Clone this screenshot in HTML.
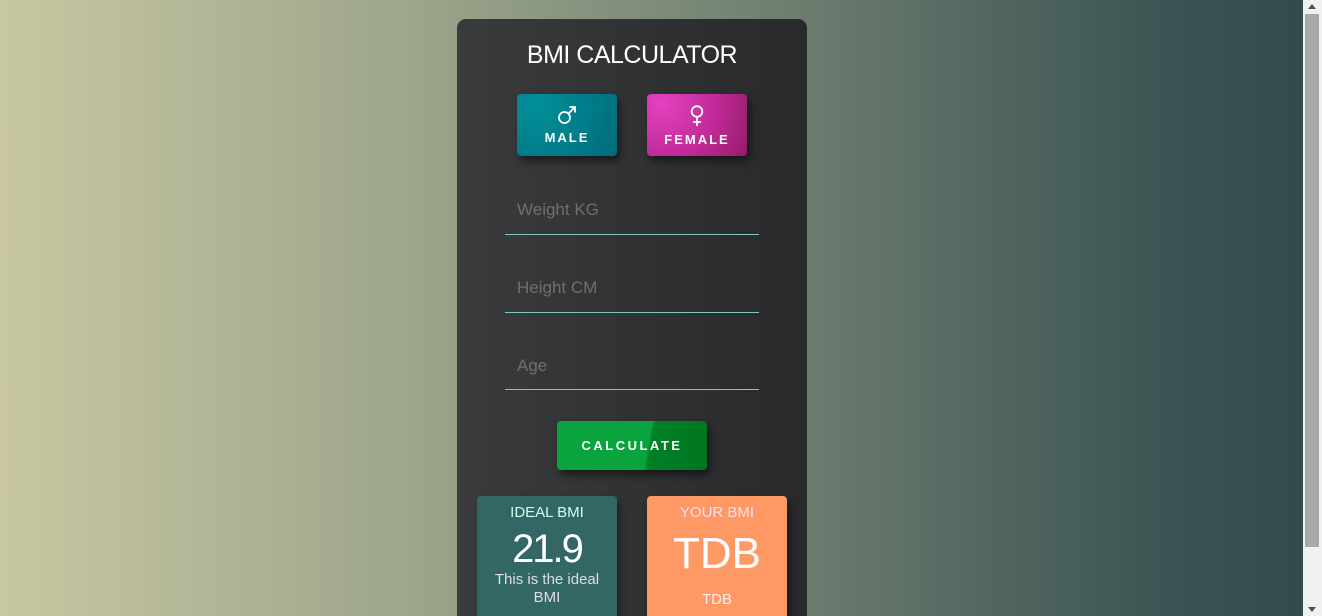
<!DOCTYPE html>
<html><head><style>
html,body{margin:0;padding:0;width:1322px;height:616px;overflow:hidden;}
body{position:relative;font-family:"Liberation Sans",sans-serif;
background:linear-gradient(90deg,#c8c7a2 0%,#9aa389 33%,#6d7d70 60%,#3c5453 88%,#324b4c 98%);}
.sb{position:absolute;left:1303px;top:0;width:19px;height:616px;background:#f1f1f1;}
.sb .th{position:absolute;left:2px;top:14px;width:14px;height:533px;background:#a8a8a8;}
.sb .up{position:absolute;left:5px;top:4px;border:4px solid transparent;border-bottom:5px solid #505050;border-top:0;}
.sb .dn{position:absolute;left:5px;bottom:4px;border:4px solid transparent;border-top:5px solid #505050;border-bottom:0;}
.card{position:absolute;left:457px;top:19px;width:350px;height:597px;border-radius:9px 9px 0 0;background:linear-gradient(90deg,#3a3b3d,#28292b);overflow:hidden;}
h1{position:absolute;left:0;width:350px;top:22px;margin:0;text-align:center;color:#fff;font-weight:normal;font-size:25px;letter-spacing:-0.5px;}
.g{position:absolute;top:75px;width:100px;height:62px;border-radius:4px;color:#fff;text-align:center;box-shadow:3px 5px 8px rgba(0,0,0,.5);}
.g svg{display:block;margin:11px auto 0;}
.g .t{font-size:13px;font-weight:bold;letter-spacing:2px;margin-top:5px;}
.m{left:60px;background:radial-gradient(circle at 20% 20%,#029098,#017a88 60%,#016a7c);}
.f{left:190px;background:radial-gradient(circle at 15% 15%,#e441c0,#c02a98 55%,#921c66);}
.in{position:absolute;left:48px;width:254px;height:0;border-bottom:1px solid #7cc8c4;}
.lb{position:absolute;left:60px;color:#6e706f;font-size:17px;}
.calc{position:absolute;left:100px;top:402px;width:150px;height:49px;border-radius:4px;background:linear-gradient(100deg,#0aa43e 60%,#008027 62%,#007520);color:#fff;font-size:13px;font-weight:bold;letter-spacing:2.5px;text-align:center;line-height:49px;box-shadow:3px 5px 8px rgba(0,0,0,.5);}
.r{position:absolute;top:477px;width:140px;height:130px;border-radius:4px;text-align:center;color:#fff;box-shadow:3px 5px 8px rgba(0,0,0,.4);}
.r .h{font-size:15px;margin-top:8px;}
</style></head><body>
<div class="card">
<h1>BMI CALCULATOR</h1>
<div class="g m"><svg width="20" height="20" viewBox="0 0 20 20" fill="none" stroke="#fff" stroke-width="1.8"><circle cx="7.5" cy="12.5" r="5.5"/><path d="M11.5 8.5L18 2M12.5 2H18V7.5"/></svg><div class="t">MALE</div></div>
<div class="g f"><svg width="16" height="22" viewBox="0 0 16 22" fill="none" stroke="#fff" stroke-width="1.8"><circle cx="8" cy="6.5" r="5.3"/><path d="M8 12v9M4 17h8"/></svg><div class="t">FEMALE</div></div>
<div class="lb" style="top:181px">Weight KG</div><div class="in" style="top:215px"></div>
<div class="lb" style="top:259px">Height CM</div><div class="in" style="top:293px"></div>
<div class="lb" style="top:337px">Age</div><div class="in" style="top:370px"></div>
<div class="calc">CALCULATE</div>
<div class="r" style="left:20px;background:#336766;"><div class="h" style="color:#cfe">IDEAL BMI</div><div style="font-size:40px;margin-top:6px;letter-spacing:-2px;line-height:44px">21.9</div><div style="font-size:15px;color:#dde;line-height:18px;margin-top:0">This is the ideal<br>BMI</div></div>
<div class="r" style="left:190px;background:#fe9966;"><div class="h" style="color:#fde">YOUR BMI</div><div style="font-size:44px;margin-top:8px;line-height:50px">TDB</div><div style="font-size:15px;margin-top:12px;color:#fee">TDB</div></div>
</div>
<div class="sb"><div class="up"></div><div class="th"></div><div class="dn"></div></div>
</body></html>
